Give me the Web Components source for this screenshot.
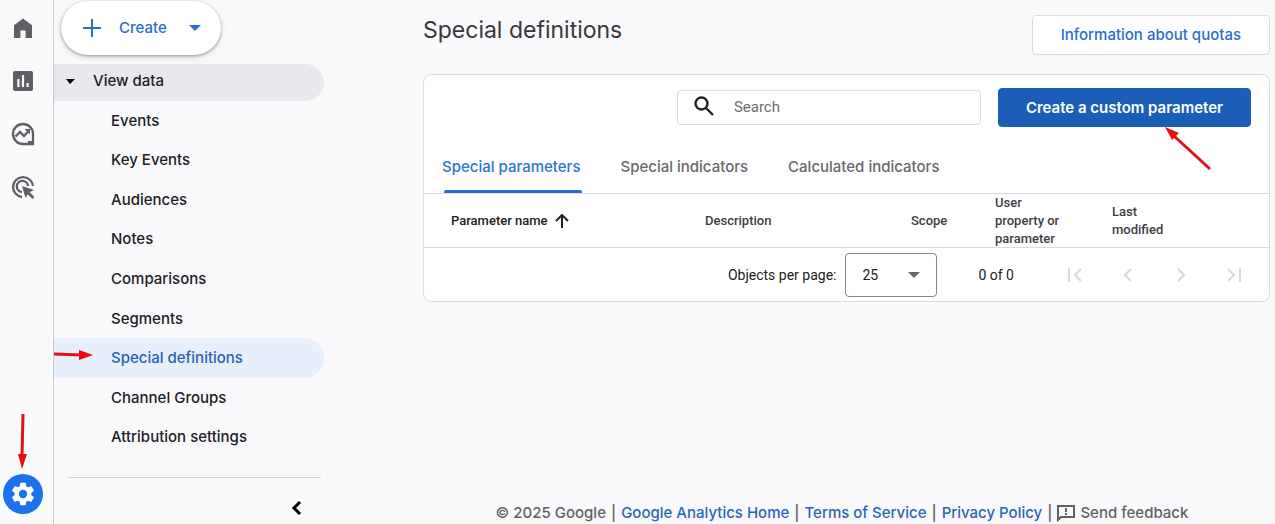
<!DOCTYPE html>
<html lang="en">
<head>
<meta charset="utf-8">
<meta name="viewport" content="width=device-width, initial-scale=1">
<title>Special definitions</title>
<style>
  html, body { margin: 0; }
  body {
    background: #f9f9fc;
    color: #202124;
    font: 500 15px/20px Inter, "Open Sans", sans-serif;
    --blue: #2a6dcc;
    --line: #dadce2;
  }
</style>
</head>
<body>
<analytics-app></analytics-app>
<script>
const define = (name, html, setup) => customElements.define(name, class extends HTMLElement {
  constructor() {
    super();
    const t = document.createElement('template');
    t.innerHTML = html;
    this.attachShadow({ mode: 'open' }).append(t.content.cloneNode(true));
  }
  connectedCallback() { if (setup) setup(this, this.shadowRoot); }
});

/* Red pointer arrows laid over the interface */
define('pointer-arrow', `
<style>
  :host { position: absolute; pointer-events: none; z-index: 3; }
  svg { display: none; overflow: visible; }
  :host([kind=right]) .right, :host([kind=down]) .down, :host([kind=upleft]) .upleft { display: block; }
  path { fill: #ee0a10; } line { stroke: #e0101a; stroke-width: 3; }
</style>
<svg class="right" width="40" height="10" aria-hidden="true"><line x1="0" y1="4" x2="27" y2="5"/><path d="M25 0L39 5L25 10Z"/></svg>
<svg class="down" width="10" height="55" aria-hidden="true"><line x1="5" y1="0" x2="4" y2="42"/><path d="M0 40H9L4 55Z"/></svg>
<svg class="upleft" width="46" height="43" aria-hidden="true"><line x1="45" y1="42" x2="9" y2="9"/><path d="M0 0L14 6L7 13Z"/></svg>`);

define('icon-rail', `
<style>
  :host { display: flex; flex-direction: column; align-items: center; box-sizing: border-box;
          width: 54px; padding: 8px 8px 10px 0; border-right: 1px solid #cfd0d5; background: #f9fafb; }
  button { all: unset; display: grid; place-items: center; width: 40px; height: 40px; margin-bottom: 13px; color: #5f6063; cursor: pointer; }
  svg { fill: currentColor; display: block; }
  .settings { position: relative; margin: auto 0 0; border-radius: 50%; background: #1a73e8; color: #fff; }
  pointer-arrow { left: 15px; top: -60px; }
</style>
<button aria-label="Home"><svg width="24" height="24" viewBox="0 0 24 24"><path d="M3 9.2L12 2.5L21 9.2V22H14.6V14.5H9.4V22H3Z"/></svg></button>
<button aria-label="Reports"><svg width="24" height="24" viewBox="0 0 24 24"><path fill-rule="evenodd" d="M4 2H20Q22 2 22 4V20Q22 22 20 22H4Q2 22 2 20V4Q2 2 4 2ZM6.3 10V18H8.5V10ZM10.9 6V18H13.1V6ZM15.5 14V18H17.7V14Z"/></svg></button>
<button aria-label="Explore"><svg width="26" height="26" viewBox="0 0 26 26"><path fill="none" stroke="currentColor" stroke-width="2.3" d="M13 23A10 10 0 1 1 23 13V23ZM5.5 15.5L10 11L14 15L18.5 10"/><path d="M14.5 8H20V13.5ZM18 20H24V24H18Z"/></svg></button>
<button aria-label="Advertising"><svg width="26" height="26" viewBox="0 0 26 26"><path fill="none" stroke="currentColor" stroke-width="2.3" d="M12 23A10 10 0 1 1 23 12M12 18A5.6 5.6 0 1 1 18 12"/><path d="M12 12L24 16L19.6 18.2L24.5 23L22.5 25L17.7 20.2L15.5 24Z"/></svg></button>
<button class="settings" aria-label="Admin"><svg width="28" height="28" viewBox="0 0 24 24"><path d="M19.14 12.94c.04-.3.06-.61.06-.94s-.02-.64-.07-.94l2.03-1.58a.49.49 0 0 0 .12-.61l-1.92-3.32a.49.49 0 0 0-.59-.22l-2.39.96c-.5-.38-1.03-.7-1.62-.94l-.36-2.54a.48.48 0 0 0-.48-.41h-3.84a.48.48 0 0 0-.47.41l-.36 2.54c-.59.24-1.13.57-1.62.94l-2.39-.96a.48.48 0 0 0-.59.22L2.74 8.87a.48.48 0 0 0 .12.61l2.03 1.58c-.05.3-.09.63-.09.94s.02.64.07.94l-2.03 1.58a.49.49 0 0 0-.12.61l1.92 3.32c.12.22.37.29.59.22l2.39-.96c.5.38 1.03.7 1.62.94l.36 2.54c.05.24.24.41.48.41h3.84c.24 0 .44-.17.47-.41l.36-2.54c.59-.24 1.13-.56 1.62-.94l2.39.96c.22.08.47 0 .59-.22l1.92-3.32a.48.48 0 0 0-.12-.61zM12 15.6A3.6 3.6 0 1 1 12 8.4a3.6 3.6 0 0 1 0 7.2z"/></svg><pointer-arrow kind="down"></pointer-arrow></button>`);

define('nav-item', `
<style>
  :host { display: flex; flex: 1; min-height: 36px; position: relative; }
  a { flex: 1; display: flex; align-items: center; padding-left: 57px; border-radius: 0 20px 20px 0; color: #202124; text-decoration: none; }
  :host([active]) a { background: #e7effc; color: #2563b5; }
  pointer-arrow { display: none; left: 0; top: 12px; }
  :host([active]) pointer-arrow { display: block; }
</style>
<a href="#"><slot></slot></a><pointer-arrow kind="right"></pointer-arrow>`);

define('side-nav', `
<style>
  :host { display: flex; flex-direction: column; width: 270px; }
  button { font: inherit; cursor: pointer; }
  .create { display: flex; align-items: center; align-self: flex-start; margin: 1px 0 9px 7px; width: 160px; height: 54px; padding: 0 20px;
            border: 0; border-radius: 27px; background: #fff; color: var(--blue); box-shadow: 0 1px 3px #0005, 0 2px 6px #0002; }
  .create span { margin-left: 16px; } .create svg:last-child { margin-left: auto; }
  .group { display: flex; align-items: center; gap: 18px; height: 37px; padding: 0 0 3px 11px; border: 0; border-radius: 0 20px 20px 0;
           background: #e8e8ed; color: #202124; box-sizing: border-box; flex: none; }
  nav { flex: 1; display: flex; flex-direction: column; }
  .foot { display: flex; justify-content: flex-end; align-items: center; margin: 20px 3px 0 14px; padding: 14px 12px 0 0; border-top: 1px solid #d3d4d9; box-sizing: border-box; height: 47px; }
  .foot button { border: 0; background: none; padding: 0; display: grid; place-items: center; width: 26px; height: 26px; }
</style>
<button class="create"><svg width="22" height="22" viewBox="0 0 22 22" fill="none" stroke="currentColor" stroke-width="2"><path d="M11 2V20M2 11H20"/></svg><span>Create</span><svg width="12" height="6"><path fill="currentColor" d="M0 0H12L6 6Z"/></svg></button>
<button class="group" aria-expanded="true"><svg width="10" height="5"><path d="M1 0H10L5 5Z"/></svg>View data</button>
<nav aria-label="View data">
  <nav-item>Events</nav-item><nav-item>Key Events</nav-item><nav-item>Audiences</nav-item><nav-item>Notes</nav-item>
  <nav-item>Comparisons</nav-item><nav-item>Segments</nav-item><nav-item active>Special definitions</nav-item>
  <nav-item>Channel Groups</nav-item><nav-item>Attribution settings</nav-item>
</nav>
<div class="foot"><button aria-label="Collapse navigation"><svg width="10" height="16" fill="none" stroke="#000" stroke-width="3"><path d="M9 2L3 8L9 14"/></svg></button></div>`);

define('action-button', `
<style>
  :host { display: block; flex: none; position: relative; }
  button { box-sizing: border-box; height: 40px; padding: 0 28px; border: 1px solid var(--line); border-radius: 4px; background: #fff;
           color: var(--blue); font: inherit; cursor: pointer; white-space: nowrap; }
  :host([primary]) button { height: 39px; padding: 0 27px; border-color: #1b5eb8; background: #1b5eb8; color: #fff; font-weight: 600; }
</style>
<button><slot></slot></button><slot name="over"></slot>`);

define('page-header', `
<style>
  :host { display: flex; justify-content: space-between; align-items: flex-start; }
  h1 { margin: 0; font-size: 23px; line-height: 30px; font-weight: 400; color: #37383b; }
</style>
<h1><slot></slot></h1><action-button>Information about quotas</action-button>`);

define('search-box', `
<style>
  :host { display: flex; align-items: center; box-sizing: border-box; width: 304px; height: 35px; border: 1px solid var(--line); border-radius: 4px; background: #fff; }
  label { display: flex; padding: 0 19px 3px 15px; }
  input { flex: 1; min-width: 0; border: 0; outline: 0; background: none; padding: 0 8px 2px 0; font: 400 15px/20px Roboto, sans-serif; color: #202124; }
  input::placeholder { color: #6c6d70; opacity: 1; }
</style>
<label for="q" aria-label="Search"><svg width="22" height="22" viewBox="0 0 22 22" fill="none" stroke="#202124" stroke-width="2.4"><circle cx="8.5" cy="8.5" r="6"/><path d="M13 13L20 20"/></svg></label>
<input id="q" type="text" placeholder="Search">`);

define('tab-bar', `
<style>
  :host { display: flex; gap: 40px; padding: 13px 18px 0; border-bottom: 1px solid var(--line); }
  button { position: relative; height: 53px; padding: 0; border: 0; background: none; color: #67686b; font: inherit; cursor: pointer; }
  button[aria-selected=true] { color: #2e74d2; }
  button[aria-selected=true]::after { content: ""; position: absolute; left: 2px; right: -2px; bottom: 0; height: 3px; border-radius: 2px 2px 0 0; background: var(--blue); }
</style>
<button role="tab" aria-selected="true">Special parameters</button><button role="tab" aria-selected="false">Special indicators</button><button role="tab" aria-selected="false">Calculated indicators</button>`,
  host => host.setAttribute('role', 'tablist'));

define('definitions-table', `
<style>
  :host { display: block; box-shadow: inset 0 -1px var(--line); }
  table { width: 100%; border-collapse: collapse; table-layout: fixed; font: 500 13px/18px Roboto, sans-serif; color: #3c4043; }
  th { padding: 0; text-align: left; font-weight: 500; box-sizing: border-box; }
  th:nth-child(1) { padding-left: 27px; color: #202124; }
  th:nth-child(2) { width: 206px; }
  th:nth-child(3) { width: 84px; }
  th:nth-child(4) { width: 117px; padding-right: 48px; }
  th:nth-child(5) { width: 157px; padding-right: 90px; }
  span { display: flex; align-items: center; gap: 7px; }
</style>
<table><thead><tr>
  <th aria-sort="ascending"><span>Parameter name <svg width="14" height="14" fill="none" stroke="#202124" stroke-width="2"><path d="M7 14V1M1 7L7 1L13 7"/></svg></span></th>
  <th>Description</th><th>Scope</th><th>User property or parameter</th><th>Last modified</th>
</tr></thead></table>`);

define('table-paginator', `
<style>
  :host { display: flex; justify-content: flex-end; align-items: center; height: 53px; padding-right: 9px; font: 400 14px/18px Roboto, sans-serif; }
  .size { position: relative; margin: 0 41px 0 9px; display: flex; align-items: center; }
  select { appearance: none; width: 92px; height: 44px; padding: 0 16px; border: 1px solid #85868b; border-radius: 4px; background: #fff; font: inherit; color: #202124; }
  .size svg { position: absolute; right: 17px; pointer-events: none; }
  .range { margin-right: 34px; }
  button { display: grid; place-items: center; width: 53px; height: 40px; padding: 0; border: 0; background: none; }
  button svg { fill: none; stroke: #d8d8dc; stroke-width: 2; }
</style>
<label for="size">Objects per page:</label>
<div class="size"><select id="size"><option>25</option><option>50</option><option>100</option></select><svg width="12" height="6"><path fill="#68696d" d="M0 0H12L6 6Z"/></svg></div>
<span class="range">0 of 0</span>
<button disabled aria-label="First page"><svg width="14" height="14"><path d="M1 0V14M13 1L7 7L13 13"/></svg></button>
<button disabled aria-label="Previous page"><svg width="14" height="14"><path d="M10 1L4 7L10 13"/></svg></button>
<button disabled aria-label="Next page"><svg width="14" height="14"><path d="M4 1L10 7L4 13"/></svg></button>
<button disabled aria-label="Last page"><svg width="14" height="14"><path d="M13 0V14M1 1L7 7L1 13"/></svg></button>`);

define('definitions-card', `
<style>
  :host { display: block; margin-top: 19px; border: 1px solid var(--line); border-radius: 8px; background: #fff; }
  .tools { display: flex; justify-content: flex-end; align-items: center; gap: 17px; padding: 13px 18px 0; }
  pointer-arrow { right: 40px; top: 39px; }
</style>
<div class="tools"><search-box></search-box><action-button primary>Create a custom parameter<pointer-arrow slot="over" kind="upleft"></pointer-arrow></action-button></div>
<tab-bar></tab-bar><definitions-table></definitions-table><table-paginator></table-paginator>`);

define('page-footer', `
<style>
  :host { display: flex; justify-content: center; align-items: center; gap: 5px; margin-top: auto; padding-right: 9px; height: 22px; color: #606164; white-space: nowrap; }
  a { color: #2866b8; text-decoration: none; }
  .feedback { display: flex; align-items: center; gap: 5px; color: inherit; }
</style>
<span>© 2025 Google</span><span>|</span><a href="#">Google Analytics Home</a><span>|</span><a href="#">Terms of Service</a><span>|</span><a href="#">Privacy Policy</a><span>|</span>
<a href="#" class="feedback"><svg width="18" height="18" fill="none" stroke="currentColor" stroke-width="2"><path d="M1 16V2H17V13H4ZM9 4V8M9 9V11"/></svg>Send feedback</a>`);

define('analytics-app', `
<style>
  :host { display: flex; min-height: 100vh; }
  icon-rail, side-nav { flex: none; }
  main { flex: 1; min-width: 0; box-sizing: border-box; display: flex; flex-direction: column; padding: 15px 5px 0 99px; }
</style>
<icon-rail></icon-rail><side-nav></side-nav>
<main><page-header>Special definitions</page-header><definitions-card></definitions-card><page-footer></page-footer></main>`);
</script>
</body>
</html>
